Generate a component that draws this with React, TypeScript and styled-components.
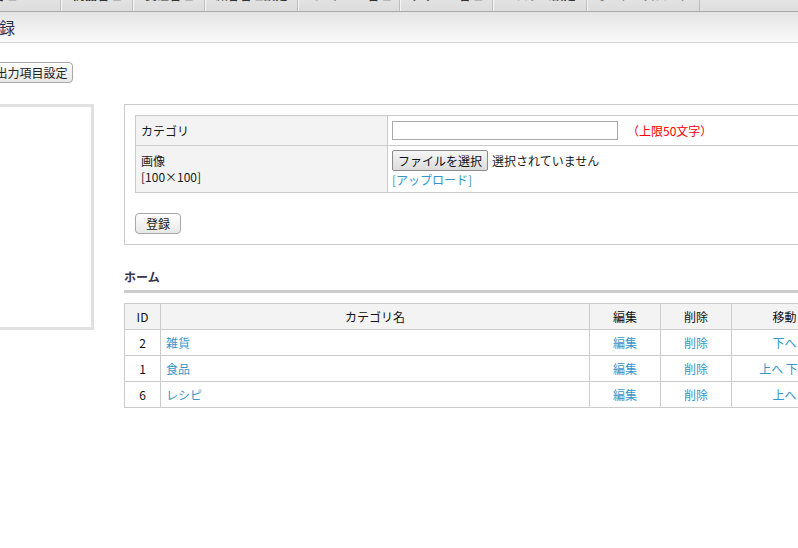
import React from "react";
import styled, { createGlobalStyle } from "styled-components";

const Global = createGlobalStyle`
  html, body { margin: 0; padding: 0; background: #fff; overflow: hidden; }
  body {
    font-family: "Noto Sans CJK JP", "Liberation Sans", sans-serif;
    font-size: 12px;
    color: #1a1a1a;
  }
  * { box-sizing: border-box; }
`;

const Page = styled.div`
  width: 1000px;
  margin: -20px 0 0 -100px;
`;

const TabBar = styled.nav`
  display: flex;
  height: 32px;
  background: linear-gradient(#f0f0f0, #dedede);
  border-bottom: 1px solid #a9a9a9;
`;

const Tab = styled.a<{ $w: number }>`
  width: ${(p) => p.$w}px;
  flex: none;
  padding-top: 6px;
  text-align: center;
  font-weight: bold;
  color: #333;
  border-left: 1px solid #f6f6f6;
  border-right: 1px solid #bdbdbd;
  background: linear-gradient(#ececec, #dcdcdc);
  white-space: nowrap;
  overflow: hidden;
`;

const Header = styled.header`
  height: 31px;
  background: linear-gradient(#e4e4e4, #fafafa);
  border-bottom: 1px solid #d2d2d2;
  padding-left: 19px;
  display: flex;
  align-items: center;
`;

const Title = styled.h1`
  margin: 0;
  font-size: 16px;
  font-weight: normal;
  color: #2f2f50;
  line-height: 20px;
`;

const Toolbar = styled.div`
  padding: 19px 0 0 20px;
  display: flex;
`;

const Button = styled.button`
  height: 21px;
  padding: 0 5px;
  font-family: inherit;
  font-size: 12px;
  line-height: 19px;
  color: #222;
  border: 1px solid #a8a8a8;
  border-radius: 4px;
  background: linear-gradient(#ffffff, #e7e7e7);
  cursor: pointer;
`;

const SubmitButton = styled(Button)`
  padding: 0 10px;
`;

const Body = styled.div`
  display: flex;
  gap: 30px;
  padding: 21px 20px 0 20px;
  align-items: flex-start;
`;

const Sidebar = styled.aside`
  width: 174px;
  height: 226px;
  flex: none;
  border: 3px solid #e0e0e0;
  background: #fff;
`;

const Main = styled.main`
  width: 720px;
  flex: none;
  display: flex;
  flex-direction: column;
`;

const Panel = styled.section`
  border: 1px solid #cccccc;
  padding: 10px 10px 10px 10px;
`;

const Table = styled.table`
  border-collapse: collapse;
  width: 100%;
  border: 1px solid #cccccc;
`;

const LabelCell = styled.th<{ $h: number }>`
  width: 252px;
  height: ${(p) => p.$h}px;
  background: #f2f3f2;
  border: 1px solid #cccccc;
  text-align: left;
  font-weight: normal;
  padding: 0 5px;
  line-height: 16px;
  vertical-align: middle;
`;

const ValueCell = styled.td`
  border: 1px solid #cccccc;
  padding: 4px 4px;
  vertical-align: middle;
  line-height: 16px;
`;

const InlineRow = styled.div`
  display: flex;
  align-items: center;
  gap: 9px;
`;

const TextInput = styled.input`
  width: 226px;
  height: 19px;
  border: 1px solid #a9a9a9;
  padding: 0 2px;
  font-family: inherit;
  font-size: 12px;
`;

const Note = styled.span`
  color: #ff0000;
`;

const FileRow = styled.div`
  display: flex;
  align-items: center;
  gap: 4px;
  font-size: 12px;
`;

const FileButton = styled.button`
  height: 21px;
  padding: 0 5px;
  font-family: inherit;
  font-size: 12px;
  line-height: 19px;
  color: #111;
  border: 1px solid #8a8a8a;
  border-radius: 2px;
  background: linear-gradient(#f6f6f6, #dcdcdc);
`;

const Link = styled.a`
  color: #3397c9;
  text-decoration: none;
  cursor: pointer;
`;

const UploadLink = styled(Link)`
  display: block;
  margin-top: 1px;
`;

const SubmitRow = styled.div`
  margin-top: 20px;
  display: flex;
`;

const SectionTitle = styled.h2`
  margin: 24px 0 0;
  padding-bottom: 5px;
  font-size: 12px;
  line-height: 16px;
  font-weight: bold;
  color: #33334f;
  border-bottom: 3px solid #cccccc;
`;

const ListTable = styled.table`
  margin-top: 10px;
  border-collapse: collapse;
  border: 1px solid #cccccc;
  table-layout: fixed;
  width: 713px;
`;

const Th = styled.th<{ $w: number }>`
  width: ${(p) => p.$w}px;
  height: 26px;
  background: #f2f3f2;
  border: 1px solid #cccccc;
  font-weight: normal;
  text-align: center;
  padding: 0 5px;
  color: #111;
`;

const Td = styled.td<{ $align?: string }>`
  height: 26px;
  border: 1px solid #cccccc;
  padding: 0 5px;
  text-align: ${(p) => p.$align || "center"};
  color: #111;
  white-space: nowrap;
`;

const tabs: [string, number][] = [
  ["基本情報管理", 161],
  ["商品管理", 72],
  ["受注管理", 72],
  ["顧客管理設定", 93],
  ["コンテンツ管理", 102],
  ["デザイン管理", 93],
  ["システム設定", 94],
  ["オーナーズストア", 113],
];

const rows = [
  { id: 2, name: "雑貨", up: false, down: true },
  { id: 1, name: "食品", up: true, down: true },
  { id: 6, name: "レシピ", up: true, down: false },
];

export default function App() {
  return (
    <>
      <Global />
      <Page>
        <TabBar>
          {tabs.map(([label, w]) => (
            <Tab key={label} $w={w}>
              {label}
            </Tab>
          ))}
        </TabBar>
        <Header>
          <Title>カテゴリ登録</Title>
        </Header>
        <Toolbar>
          <Button>カテゴリCSV出力項目設定</Button>
        </Toolbar>
        <Body>
          <Sidebar />
          <Main>
            <Panel>
              <Table>
                <tbody>
                  <tr>
                    <LabelCell $h={30}>カテゴリ</LabelCell>
                    <ValueCell>
                      <InlineRow>
                        <TextInput type="text" />
                        <Note>（上限50文字）</Note>
                      </InlineRow>
                    </ValueCell>
                  </tr>
                  <tr>
                    <LabelCell $h={47}>
                      画像
                      <br />
                      [100×100]
                    </LabelCell>
                    <ValueCell>
                      <FileRow>
                        <FileButton>ファイルを選択</FileButton>
                        <span>選択されていません</span>
                      </FileRow>
                      <UploadLink>[アップロード]</UploadLink>
                    </ValueCell>
                  </tr>
                </tbody>
              </Table>
              <SubmitRow>
                <SubmitButton>登録</SubmitButton>
              </SubmitRow>
            </Panel>
            <SectionTitle>ホーム</SectionTitle>
            <ListTable>
              <thead>
                <tr>
                  <Th $w={36}>ID</Th>
                  <Th $w={429}>カテゴリ名</Th>
                  <Th $w={71}>編集</Th>
                  <Th $w={71}>削除</Th>
                  <Th $w={106}>移動</Th>
                </tr>
              </thead>
              <tbody>
                {rows.map((r) => (
                  <tr key={r.id}>
                    <Td>{r.id}</Td>
                    <Td $align="left">
                      <Link>{r.name}</Link>
                    </Td>
                    <Td>
                      <Link>編集</Link>
                    </Td>
                    <Td>
                      <Link>削除</Link>
                    </Td>
                    <Td>
                      {r.up && <Link>上へ</Link>}
                      {r.up && r.down && " "}
                      {r.down && <Link>下へ</Link>}
                    </Td>
                  </tr>
                ))}
              </tbody>
            </ListTable>
          </Main>
        </Body>
      </Page>
    </>
  );
}
